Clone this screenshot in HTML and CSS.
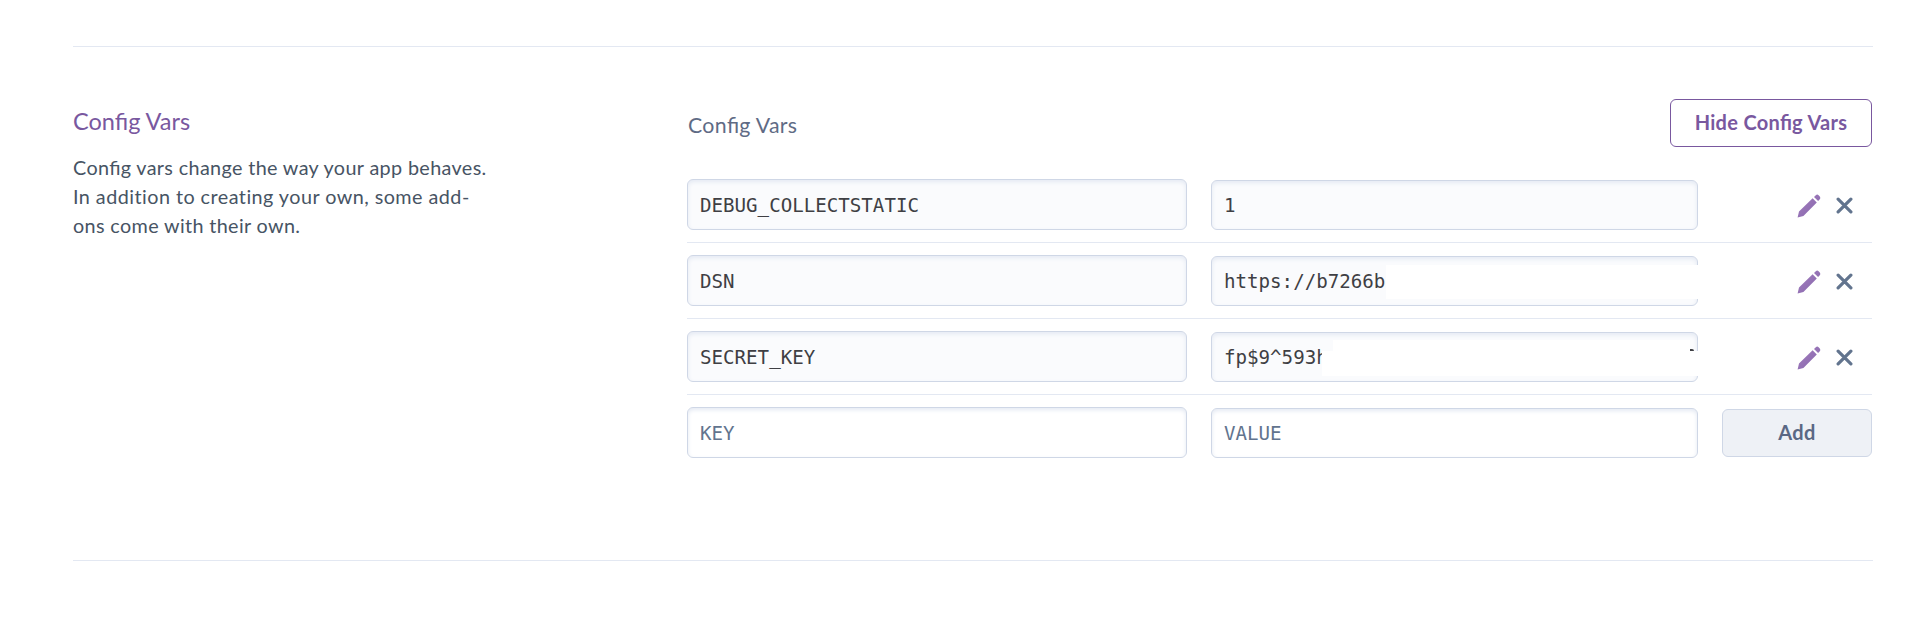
FILE: index.html
```html
<!DOCTYPE html>
<html lang="en">
<head>
<meta charset="utf-8">
<title>Config Vars</title>
<link rel="stylesheet" href="styles.css">
</head>
<body>
<svg class="sprite" aria-hidden="true">
  <defs>
    <linearGradient id="ink" x1="0" y1="0" x2="1" y2="1">
      <stop offset="0" stop-color="#a67fc0"/>
      <stop offset="1" stop-color="#8466ab"/>
    </linearGradient>
    <symbol id="pencil" viewBox="0 0 24 24">
      <path fill="url(#ink)" d="M0.6 23.4 L2 17.6 L15.6 4.2 L19.8 8.4 L6.4 21.9 Z M17 2.9 L18.8 1.2 Q20.2 0 21.6 1.2 L22.8 2.4 Q24 3.8 22.8 5.2 L21.1 7 Z"/>
    </symbol>
    <symbol id="cross" viewBox="0 0 16 16">
      <path d="M2 2 L14 14 M14 2 L2 14" fill="none" stroke="#62748e" stroke-width="3" stroke-linecap="round"/>
    </symbol>
  </defs>
</svg>
<main class="page">
  <section class="settings">
    <div class="about">
      <h2 class="about-title">Config Vars</h2>
      <p class="about-text">Con<span class="lig">fi</span>g vars change the way your app behaves.<br><span class="wide">In addition to creating your own, some add-</span><br>ons come with their own.</p>
    </div>
    <div class="vars">
      <header class="vars-head">
        <h3 class="vars-title">Con<span class="lig">fi</span>g Vars</h3>
        <button class="btn btn-outline">Hide Con<span class="lig">fi</span>g Vars</button>
      </header>
      <div class="row">
        <div class="field key locked">DEBUG_COLLECTSTATIC</div>
        <div class="field value locked">1</div>
        <div class="actions"><svg class="pencil"><use href="#pencil"/></svg><svg class="cross"><use href="#cross"/></svg></div>
      </div>
      <div class="row">
        <div class="field key locked">DSN</div>
        <div class="field value locked">https://b7266b<span class="mask mask-dsn"></span></div>
        <div class="actions"><svg class="pencil"><use href="#pencil"/></svg><svg class="cross"><use href="#cross"/></svg></div>
      </div>
      <div class="row">
        <div class="field key locked">SECRET_KEY</div>
        <div class="field value locked">fp$9^593h<span class="mask mask-upper"></span><span class="mask mask-lower"></span><span class="tick"></span></div>
        <div class="actions"><svg class="pencil"><use href="#pencil"/></svg><svg class="cross"><use href="#cross"/></svg></div>
      </div>
      <div class="row">
        <div class="field key empty">KEY</div>
        <div class="field value empty">VALUE</div>
        <button class="btn btn-add">Add</button>
      </div>
    </div>
  </section>
</main>
</body>
</html>
```
FILE: styles.css
```css
* { box-sizing: border-box; }
body { margin: 0; background: #fff; font-family: Lato, "Open Sans", sans-serif; }
.sprite { position: absolute; width: 0; height: 0; }
.page { padding: 46px 35px 0 73px; }
.settings {
  display: grid;
  grid-template-columns: 614px 1185px;
  height: 515px;
  border-top: 1px solid #e3e8f2;
  border-bottom: 1px solid #e3e8f2;
}
.about { padding-top: 57px; }
.about-title { margin: 0; font-size: 23.5px; line-height: 34px; font-weight: 400; color: #79589f; }
.about-text { margin: 15px 0 0; font-size: 19.8px; line-height: 29px; letter-spacing: 0.36px; color: #475464; white-space: nowrap; }
/* Letter-spacing turns ligatures off; restore the joined pair */
.lig { letter-spacing: 0; }
.wide { letter-spacing: 0.46px; }
.vars { padding-top: 52px; }
.vars-head { display: flex; justify-content: space-between; height: 68px; }
.vars-title { margin: 11px 0 0 1px; font-size: 21.3px; line-height: 30px; letter-spacing: 0.35px; font-weight: 400; color: #5f6b85; }
.btn {
  height: 48px;
  padding: 0 0 2px;
  border-radius: 6px;
  font: 700 20px/44px Lato, sans-serif;
  letter-spacing: 0.3px;
  white-space: nowrap;
}
.btn-outline { width: 202px; border: 1px solid #79589f; background: #fff; color: #79589f; }
.btn-add { height: 48px; border: 1px solid #cfd7e6; background: #eef1f6; color: #5a6884; }
.row {
  display: grid;
  grid-template-columns: 500px 487px 150px;
  column-gap: 24px;
  height: 76px;
  padding-top: 12px;
  align-items: start;
  border-bottom: 1px solid #e3e8f2;
}
.row:last-child { border-bottom: 0; }
.field {
  position: relative;
  border: 1px solid #cfd7e6;
  border-radius: 6px;
  box-shadow: inset 0 2px 4px #e4e9f3;
  padding-left: 12px;
  font-family: "DejaVu Sans Mono", monospace;
  font-size: 19.15px;
  color: #3f3f44;
  white-space: nowrap;
}
.key { height: 51px; line-height: 51px; }
.value { height: 50px; margin-top: 1px; line-height: 49px; }
.locked { background: #fafbfd; }
.empty { background: #fff; color: #62748e; }
.actions { display: flex; align-items: center; gap: 15px; padding: 15px 0 0 75px; }
.pencil { width: 24px; height: 24px; }
.cross { width: 17px; height: 17px; margin-top: -1px; }
.row .btn-add { margin-top: 2px; }
/* Blocks that hide the secret part of a value */
.mask { position: absolute; background: #fff; }
.mask-dsn { left: 174px; right: -2px; top: 8px; height: 34px; }
.mask-upper { left: 121px; right: 7px; top: 7px; height: 12px; }
.mask-lower { left: 110px; right: -2px; top: 18px; height: 25px; }
.tick { position: absolute; right: 3px; top: 16px; width: 4px; height: 2px; background: #3f3f44; border-top-right-radius: 2px; }
```
